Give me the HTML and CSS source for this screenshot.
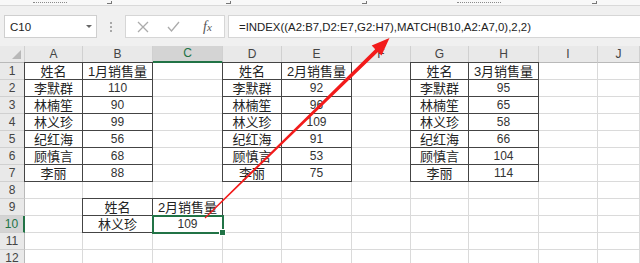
FILE: index.html
```html
<!DOCTYPE html>
<html lang="zh-CN">
<head>
  <meta charset="UTF-8">
  <title>INDEX MATCH</title>
  <link rel="stylesheet" href="styles.css">
</head>
<body>
  <div class="ribbon">
    <span class="rb-mark rb-w34"></span>
    <span class="launch launch-a"></span>
    <span class="launch launch-b"></span>
    <span class="launch launch-c"></span>
    <span class="rb-mark rb-w44 rb-gap"></span>
    <span class="launch launch-d"></span>
  </div>

  <div class="fbar">
    <div class="name-box">
      <span>C10</span>
      <span class="caret"></span>
    </div>
    <div class="grip"></div>
    <div class="fx-box">
      <svg class="fx-icon" width="12" height="12" viewBox="0 0 12 12">
        <path d="M1 1 L11 11 M11 1 L1 11" stroke="#ababab" stroke-width="1.3" fill="none"/>
      </svg>
      <svg class="fx-icon" width="13" height="11" viewBox="0 0 13 11">
        <path d="M1 6 L4.5 10 L12 1" stroke="#ababab" stroke-width="1.3" fill="none"/>
      </svg>
      <span class="fx">f<small>x</small></span>
    </div>
    <div class="formula">=INDEX((A2:B7,D2:E7,G2:H7),MATCH(B10,A2:A7,0),2,2)</div>
  </div>

  <div class="sheet">
    <!-- header row -->
    <div class="c ch corner"><span class="tri"></span></div>
    <div class="c ch">A</div>
    <div class="c ch">B</div>
    <div class="c ch sel">C</div>
    <div class="c ch">D</div>
    <div class="c ch">E</div>
    <div class="c ch">F</div>
    <div class="c ch">G</div>
    <div class="c ch">H</div>
    <div class="c ch">I</div>
    <div class="c ch">J</div>

    <!-- 1 -->
    <div class="c rh">1</div>
    <div class="c b btl">姓名</div>
    <div class="c b bt">1月销售量</div>
    <div class="c"></div>
    <div class="c b btl">姓名</div>
    <div class="c b bt">2月销售量</div>
    <div class="c"></div>
    <div class="c b btl">姓名</div>
    <div class="c b bt">3月销售量</div>
    <div class="c"></div>
    <div class="c"></div>

    <!-- 2 -->
    <div class="c rh">2</div>
    <div class="c b bl">李默群</div>
    <div class="c b n">110</div>
    <div class="c"></div>
    <div class="c b bl">李默群</div>
    <div class="c b n">92</div>
    <div class="c"></div>
    <div class="c b bl">李默群</div>
    <div class="c b n">95</div>
    <div class="c"></div>
    <div class="c"></div>

    <!-- 3 -->
    <div class="c rh">3</div>
    <div class="c b bl">林楠笙</div>
    <div class="c b n">90</div>
    <div class="c"></div>
    <div class="c b bl">林楠笙</div>
    <div class="c b n">96</div>
    <div class="c"></div>
    <div class="c b bl">林楠笙</div>
    <div class="c b n">65</div>
    <div class="c"></div>
    <div class="c"></div>

    <!-- 4 -->
    <div class="c rh">4</div>
    <div class="c b bl">林义珍</div>
    <div class="c b n">99</div>
    <div class="c"></div>
    <div class="c b bl">林义珍</div>
    <div class="c b n">109</div>
    <div class="c"></div>
    <div class="c b bl">林义珍</div>
    <div class="c b n">58</div>
    <div class="c"></div>
    <div class="c"></div>

    <!-- 5 -->
    <div class="c rh">5</div>
    <div class="c b bl">纪红海</div>
    <div class="c b n">56</div>
    <div class="c"></div>
    <div class="c b bl">纪红海</div>
    <div class="c b n">91</div>
    <div class="c"></div>
    <div class="c b bl">纪红海</div>
    <div class="c b n">66</div>
    <div class="c"></div>
    <div class="c"></div>

    <!-- 6 -->
    <div class="c rh">6</div>
    <div class="c b bl">顾慎言</div>
    <div class="c b n">68</div>
    <div class="c"></div>
    <div class="c b bl">顾慎言</div>
    <div class="c b n">53</div>
    <div class="c"></div>
    <div class="c b bl">顾慎言</div>
    <div class="c b n">104</div>
    <div class="c"></div>
    <div class="c"></div>

    <!-- 7 -->
    <div class="c rh">7</div>
    <div class="c b bl">李丽</div>
    <div class="c b n">88</div>
    <div class="c"></div>
    <div class="c b bl">李丽</div>
    <div class="c b n">75</div>
    <div class="c"></div>
    <div class="c b bl">李丽</div>
    <div class="c b n">114</div>
    <div class="c"></div>
    <div class="c"></div>

    <!-- 8 -->
    <div class="c rh">8</div>
    <div class="c"></div><div class="c"></div><div class="c"></div><div class="c"></div><div class="c"></div>
    <div class="c"></div><div class="c"></div><div class="c"></div><div class="c"></div><div class="c"></div>

    <!-- 9 -->
    <div class="c rh">9</div>
    <div class="c"></div>
    <div class="c b btl">姓名</div>
    <div class="c b bt">2月销售量</div>
    <div class="c"></div><div class="c"></div><div class="c"></div><div class="c"></div>
    <div class="c"></div><div class="c"></div><div class="c"></div>

    <!-- 10 -->
    <div class="c rh sel">10</div>
    <div class="c"></div>
    <div class="c b bl">林义珍</div>
    <div class="c b n active">109</div>
    <div class="c"></div><div class="c"></div><div class="c"></div><div class="c"></div>
    <div class="c"></div><div class="c"></div><div class="c"></div>

    <!-- 11 -->
    <div class="c rh">11</div>
    <div class="c"></div><div class="c"></div><div class="c"></div><div class="c"></div><div class="c"></div>
    <div class="c"></div><div class="c"></div><div class="c"></div><div class="c"></div><div class="c"></div>

    <!-- 12 -->
    <div class="c rh">12</div>
    <div class="c"></div><div class="c"></div><div class="c"></div><div class="c"></div><div class="c"></div>
    <div class="c"></div><div class="c"></div><div class="c"></div><div class="c"></div><div class="c"></div>
  </div>

  <svg class="arrow" width="640" height="263" viewBox="0 0 640 263">
    <polygon fill="#f21b1b" points="204.6,217.6 375.2,49.2 371.7,45.6 389.5,38 381.5,55.6 378,52 205.4,218.4"/>
  </svg>
</body>
</html>
```

FILE: styles.css
```css
body {
  margin: 0;
  width: 640px;
  height: 263px;
  overflow: hidden;
  position: relative;
  background: #fff;
  font-family: "Liberation Sans", "Noto Sans CJK SC", sans-serif;
  color: #222;
}

/* ribbon, only its bottom edge is visible */
.ribbon {
  height: 5px;
  background: #f8f8f8;
  border-bottom: 1px solid #d9d9d9;
  display: flex;
  align-items: flex-end;
  overflow: hidden;
}

.rb-mark {
  height: 2px;
  margin-bottom: 1px;
  border-top: 1px dotted #8a8a8a;
  box-sizing: border-box;
}

.rb-w34 { width: 34px; margin-left: 33px; }
.rb-w44 { width: 44px; }
.rb-gap { margin-left: 90px; }

.launch {
  width: 5px;
  height: 3px;
  margin-bottom: 1px;
  border-right: 1px solid #777;
  border-bottom: 1px solid #777;
  box-sizing: border-box;
}

.launch-a { margin-left: 40px; }
.launch-b { margin-left: 114px; }
.launch-c { margin-left: 131px; }
.launch-d { margin-left: 91px; }

/* formula bar */
.fbar {
  height: 40px;
  background: #f0f0f0;
  display: flex;
  padding-top: 9px;
  box-sizing: border-box;
  font-size: 11.5px;
}

.name-box {
  width: 93px;
  height: 23px;
  margin-left: 4px;
  box-sizing: border-box;
  background: #fff;
  border: 1px solid #cfcfcf;
  display: flex;
  align-items: center;
  justify-content: space-between;
  padding: 0 4px 0 5px;
}

.caret {
  width: 0;
  height: 0;
  border-left: 3px solid transparent;
  border-right: 3px solid transparent;
  border-top: 3px solid #666;
}

.grip {
  width: 0;
  height: 10px;
  margin: 7px 0 0 13px;
  border-left: 2px dotted #a8a8a8;
}

.fx-box {
  width: 100px;
  height: 23px;
  margin-left: 13px;
  box-sizing: border-box;
  background: #fff;
  border: 1px solid #d6d6d6;
  display: flex;
  align-items: center;
  gap: 18px;
  padding-left: 11px;
}

.fx {
  font-family: "Liberation Serif", serif;
  font-style: italic;
  font-size: 14px;
  color: #555;
  margin-left: 5px;
}

.fx small {
  font-size: 11px;
}

.formula {
  flex: 1;
  height: 23px;
  margin-left: 3px;
  box-sizing: border-box;
  background: #fff;
  border: 1px solid #d6d6d6;
  border-right: none;
  padding: 4px 0 0 10px;
  font-size: 11.4px;
  line-height: 14px;
  white-space: nowrap;
}

/* sheet grid */
.sheet {
  display: grid;
  grid-template-columns: 25px 58px 70px 70px 59px 70px 59px 58px 70px 59px 1fr;
  grid-template-rows: repeat(13, 17px);
}

.c {
  box-sizing: border-box;
  border-right: 1px solid #dadada;
  border-bottom: 1px solid #dadada;
  display: flex;
  align-items: flex-end;
  justify-content: center;
  font-size: 13px;
  line-height: 13px;
  padding-bottom: 1px;
  white-space: nowrap;
}

.c.n {
  font-size: 12px;
  padding-bottom: 1px;
  color: #333;
}

.ch,
.rh {
  background: #e9e9e9;
  color: #444;
  font-size: 12px;
  align-items: center;
  padding: 0;
}

.ch {
  border-right-color: #d0d0d0;
  border-bottom-color: #b9b9b9;
}

.rh {
  border-right-color: #b9b9b9;
  border-bottom-color: #d0d0d0;
}

.ch.sel {
  background: #d4d4d4;
  color: #217346;
  border-bottom: 2px solid #217346;
}

.rh.sel {
  background: #d4d4d4;
  color: #217346;
  border-right: 2px solid #217346;
}

.corner {
  justify-content: flex-end;
  align-items: flex-end;
  padding: 0 3px 3px 0;
}

.tri {
  width: 0;
  height: 0;
  border-left: 9px solid transparent;
  border-bottom: 9px solid #b8b8b8;
}

/* thin black cell borders of the data tables */
.b {
  border-right-color: #444;
  border-bottom-color: #444;
}

.bl { box-shadow: -1px 0 0 #444; }
.bt { box-shadow: 0 -1px 0 #444; }
.btl { box-shadow: -1px 0 0 #444, 0 -1px 0 #444, -1px -1px 0 #444; }

.active {
  position: relative;
  outline: 2px solid #217346;
  outline-offset: -1px;
}

.active::after {
  content: "";
  position: absolute;
  right: -4px;
  bottom: -4px;
  width: 5px;
  height: 5px;
  background: #217346;
  border: 1px solid #fff;
}

.arrow {
  position: absolute;
  top: 0;
  left: 0;
  pointer-events: none;
}
```
